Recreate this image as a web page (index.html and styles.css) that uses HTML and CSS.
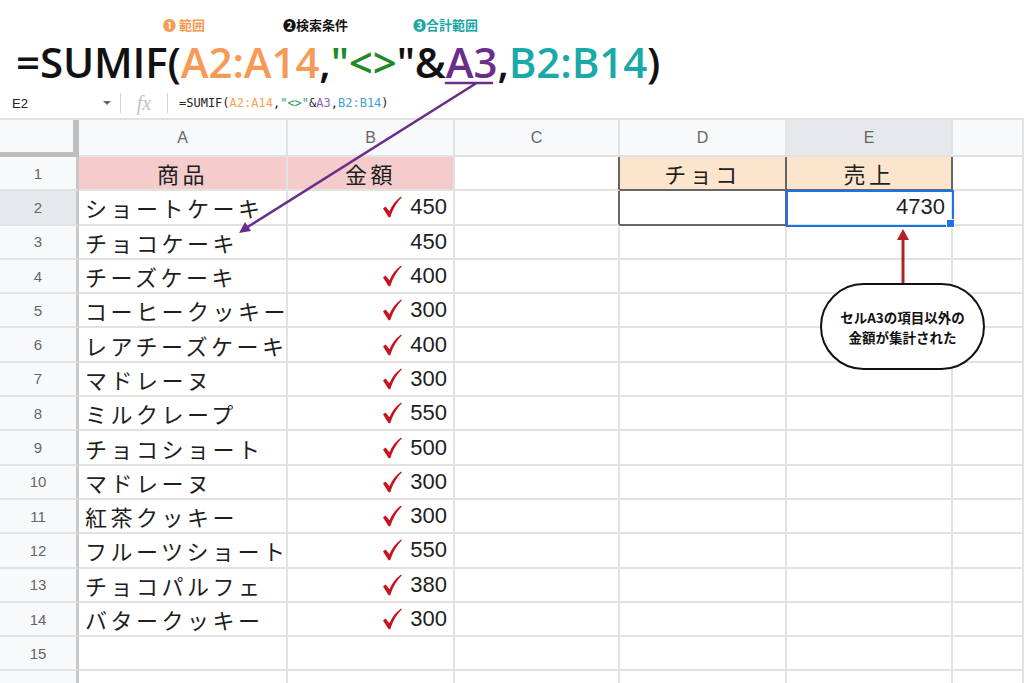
FILE: index.html
```html
<!DOCTYPE html>
<html lang="ja">
<head>
<meta charset="utf-8">
<title>SUMIF</title>
<link rel="stylesheet" href="styles.css">
</head>
<body>
<div class="page">
  <div class="top">
    <div class="labels">
      <span class="lbl lbl1">❶ 範囲</span>
      <span class="lbl lbl2">❷検索条件</span>
      <span class="lbl lbl3">❸合計範囲</span>
    </div>
    <div class="big">=SUMIF(<span class="c-or">A2:A14</span>,<span class="c-gr">"&lt;&gt;</span>"&amp;<span class="c-pu">A3</span>,<span class="c-te">B2:B14</span>)</div>
  </div>
  <div class="fbar">
    <div class="namebox">E2</div>
    <div class="caret"></div>
    <div class="sep"></div>
    <div class="fx">fx</div>
    <div class="sep"></div>
    <div class="ftext">=SUMIF(<span class="f-or">A2:A14</span>,<span class="f-gr">"&lt;&gt;"</span>&amp;<span class="f-pu">A3</span>,<span class="f-bl">B2:B14</span>)</div>
  </div>
  <div class="sheet">
    <div class="corner"></div>
    <div class="ch">A</div><div class="ch">B</div><div class="ch">C</div><div class="ch">D</div><div class="ch sel">E</div><div class="ch"></div>

    <div class="rh">1</div>
    <div class="c jp pink center">商品</div><div class="c jp pink center">金額</div><div class="c dk-r"></div><div class="c jp peach center dk-r dk-b">チョコ</div><div class="c jp peach center dk-r dk-b">売上</div><div class="c"></div>

    <div class="rh sel">2</div>
    <div class="c jp">ショートケーキ</div><div class="c num"><svg class="chk" viewBox="0 0 20 22"><path d="M1 12.6 L3.6 10.6 L7.4 15.2 C10.2 9 14 4.2 19 0.6 L19.8 1.6 C15 6.2 11.2 12.4 8.3 21.2 L6.6 21.2 Z"/></svg>450</div><div class="c dk-r"></div><div class="c dk-r dk-b"></div><div class="c num active">4730</div><div class="c"></div>

    <div class="rh">3</div>
    <div class="c jp">チョコケーキ</div><div class="c num">450</div><div class="c"></div><div class="c"></div><div class="c"></div><div class="c"></div>

    <div class="rh">4</div>
    <div class="c jp">チーズケーキ</div><div class="c num"><svg class="chk" viewBox="0 0 20 22"><path d="M1 12.6 L3.6 10.6 L7.4 15.2 C10.2 9 14 4.2 19 0.6 L19.8 1.6 C15 6.2 11.2 12.4 8.3 21.2 L6.6 21.2 Z"/></svg>400</div><div class="c"></div><div class="c"></div><div class="c"></div><div class="c"></div>

    <div class="rh">5</div>
    <div class="c jp">コーヒークッキー</div><div class="c num"><svg class="chk" viewBox="0 0 20 22"><path d="M1 12.6 L3.6 10.6 L7.4 15.2 C10.2 9 14 4.2 19 0.6 L19.8 1.6 C15 6.2 11.2 12.4 8.3 21.2 L6.6 21.2 Z"/></svg>300</div><div class="c"></div><div class="c"></div><div class="c"></div><div class="c"></div>

    <div class="rh">6</div>
    <div class="c jp">レアチーズケーキ</div><div class="c num"><svg class="chk" viewBox="0 0 20 22"><path d="M1 12.6 L3.6 10.6 L7.4 15.2 C10.2 9 14 4.2 19 0.6 L19.8 1.6 C15 6.2 11.2 12.4 8.3 21.2 L6.6 21.2 Z"/></svg>400</div><div class="c"></div><div class="c"></div><div class="c"></div><div class="c"></div>

    <div class="rh">7</div>
    <div class="c jp">マドレーヌ</div><div class="c num"><svg class="chk" viewBox="0 0 20 22"><path d="M1 12.6 L3.6 10.6 L7.4 15.2 C10.2 9 14 4.2 19 0.6 L19.8 1.6 C15 6.2 11.2 12.4 8.3 21.2 L6.6 21.2 Z"/></svg>300</div><div class="c"></div><div class="c"></div><div class="c"></div><div class="c"></div>

    <div class="rh">8</div>
    <div class="c jp">ミルクレープ</div><div class="c num"><svg class="chk" viewBox="0 0 20 22"><path d="M1 12.6 L3.6 10.6 L7.4 15.2 C10.2 9 14 4.2 19 0.6 L19.8 1.6 C15 6.2 11.2 12.4 8.3 21.2 L6.6 21.2 Z"/></svg>550</div><div class="c"></div><div class="c"></div><div class="c"></div><div class="c"></div>

    <div class="rh">9</div>
    <div class="c jp">チョコショート</div><div class="c num"><svg class="chk" viewBox="0 0 20 22"><path d="M1 12.6 L3.6 10.6 L7.4 15.2 C10.2 9 14 4.2 19 0.6 L19.8 1.6 C15 6.2 11.2 12.4 8.3 21.2 L6.6 21.2 Z"/></svg>500</div><div class="c"></div><div class="c"></div><div class="c"></div><div class="c"></div>

    <div class="rh">10</div>
    <div class="c jp">マドレーヌ</div><div class="c num"><svg class="chk" viewBox="0 0 20 22"><path d="M1 12.6 L3.6 10.6 L7.4 15.2 C10.2 9 14 4.2 19 0.6 L19.8 1.6 C15 6.2 11.2 12.4 8.3 21.2 L6.6 21.2 Z"/></svg>300</div><div class="c"></div><div class="c"></div><div class="c"></div><div class="c"></div>

    <div class="rh">11</div>
    <div class="c jp">紅茶クッキー</div><div class="c num"><svg class="chk" viewBox="0 0 20 22"><path d="M1 12.6 L3.6 10.6 L7.4 15.2 C10.2 9 14 4.2 19 0.6 L19.8 1.6 C15 6.2 11.2 12.4 8.3 21.2 L6.6 21.2 Z"/></svg>300</div><div class="c"></div><div class="c"></div><div class="c"></div><div class="c"></div>

    <div class="rh">12</div>
    <div class="c jp">フルーツショート</div><div class="c num"><svg class="chk" viewBox="0 0 20 22"><path d="M1 12.6 L3.6 10.6 L7.4 15.2 C10.2 9 14 4.2 19 0.6 L19.8 1.6 C15 6.2 11.2 12.4 8.3 21.2 L6.6 21.2 Z"/></svg>550</div><div class="c"></div><div class="c"></div><div class="c"></div><div class="c"></div>

    <div class="rh">13</div>
    <div class="c jp">チョコパルフェ</div><div class="c num"><svg class="chk" viewBox="0 0 20 22"><path d="M1 12.6 L3.6 10.6 L7.4 15.2 C10.2 9 14 4.2 19 0.6 L19.8 1.6 C15 6.2 11.2 12.4 8.3 21.2 L6.6 21.2 Z"/></svg>380</div><div class="c"></div><div class="c"></div><div class="c"></div><div class="c"></div>

    <div class="rh">14</div>
    <div class="c jp">バタークッキー</div><div class="c num"><svg class="chk" viewBox="0 0 20 22"><path d="M1 12.6 L3.6 10.6 L7.4 15.2 C10.2 9 14 4.2 19 0.6 L19.8 1.6 C15 6.2 11.2 12.4 8.3 21.2 L6.6 21.2 Z"/></svg>300</div><div class="c"></div><div class="c"></div><div class="c"></div><div class="c"></div>

    <div class="rh">15</div>
    <div class="c"></div><div class="c"></div><div class="c"></div><div class="c"></div><div class="c"></div><div class="c"></div>

    <div class="rh"></div>
    <div class="c"></div><div class="c"></div><div class="c"></div><div class="c"></div><div class="c"></div><div class="c"></div>
  </div>

  <svg class="overlay" viewBox="0 0 1024 683" width="1024" height="683">
    <g stroke="#6b2d8c" stroke-width="2.6" fill="none" stroke-linecap="round">
      <line x1="446" y1="83" x2="492" y2="83"/>
      <line x1="475" y1="84" x2="246" y2="228"/>
    </g>
    <path d="M239 233 L245 222 L251 231 Z" fill="#6b2d8c"/>
    <line x1="903" y1="290" x2="903" y2="238" stroke="#b3202a" stroke-width="3"/>
    <path d="M903 229 L897 240 L909 240 Z" fill="#b3202a"/>
  </svg>

  <div class="callout">セルA3の項目以外の<br>金額が集計された</div>
</div>
</body>
</html>
```

FILE: styles.css
```css
* { box-sizing: border-box; }
html, body { margin: 0; padding: 0; background: #fff; }
body { width: 1024px; height: 683px; overflow: hidden; font-family: "Liberation Sans", "Noto Sans CJK JP", sans-serif; color: #222; }
.page { position: relative; width: 1024px; height: 683px; overflow: hidden; }

.top { height: 88px; padding-top: 16px; }
.labels { display: flex; height: 18px; font-family: "Noto Sans CJK JP", sans-serif; font-weight: 700; font-size: 13px; line-height: 18px; }
.lbl { display: block; }
.lbl1 { margin-left: 163px; width: 120px; color: #f79a55; }
.lbl2 { width: 130px; color: #111; }
.lbl3 { color: #1aa7a7; }
.big { margin-top: 6px; padding-left: 16px; font-family: "Open Sans", sans-serif; font-weight: 600; font-size: 42px; line-height: 44px; color: #111; white-space: nowrap; letter-spacing: -0.1px; }
.c-or { color: #f79a55; }
.c-gr { color: #1f8a2a; }
.c-pu { color: #6b2d8c; }
.c-te { color: #19a9a9; }

.fbar { height: 30px; display: flex; align-items: center; }
.namebox { width: 100px; padding-left: 12px; font-size: 13px; color: #222; }
.caret { width: 0; height: 0; border-left: 4px solid transparent; border-right: 4px solid transparent; border-top: 4px solid #666; margin-left: 3px; margin-right: 9px; }
.sep { width: 1px; height: 20px; background: #d4d4d4; }
.fx { width: 46px; text-align: center; font-family: "Liberation Serif", serif; font-style: italic; font-size: 20px; color: #c2c2c2; line-height: 20px; }
.ftext { padding-left: 11px; font-family: "DejaVu Sans Mono", monospace; font-size: 12px; color: #222; white-space: nowrap; }
.f-or { color: #f3a350; }
.f-gr { color: #2e9a5e; }
.f-pu { color: #8e63b8; }
.f-bl { color: #42a0dc; }

.sheet { display: grid; grid-template-columns: 79px 209px 167px 165px 167px 166px 71px; grid-template-rows: 37px repeat(16, 34.3px); border-top: 2px solid #e2e2e2; }
.corner { background: #f8f9fa; border-right: 6px solid #bebebe; border-bottom: 5px solid #bebebe; }
.ch { background: #f8f9fa; border-right: 2px solid #e2e2e2; border-bottom: 2px solid #e2e2e2; display: flex; align-items: center; justify-content: center; font-size: 16px; color: #666; }
.ch.sel { background: #e6e8eb; }
.rh { background: #f8f9fa; border-right: 3px solid #c8c8c8; border-bottom: 2px solid #e2e2e2; display: flex; align-items: center; justify-content: center; font-size: 15px; color: #666; }
.rh.sel { background: #e6e8eb; }
.c { border-right: 2px solid #e2e2e2; border-bottom: 2px solid #e2e2e2; display: flex; align-items: center; padding: 0 6px; font-size: 22px; color: #1e1e1e; white-space: nowrap; }
.jp { font-family: "Liberation Sans", "Noto Sans CJK JP", sans-serif; letter-spacing: 3.5px; font-weight: 400; }
.center { justify-content: center; }
.num { justify-content: flex-end; gap: 8px; }
.pink { background: #f4cccc; }
.peach { background: #fce5cd; }
.dk-r { border-right-color: #666; }
.dk-b { border-bottom-color: #666; }
.chk { width: 20px; height: 22px; fill: #c8121e; }
.active { position: relative; outline: 2px solid #1a73e8; outline-offset: -1px; }
.active::after { content: ""; position: absolute; right: -4px; bottom: -4px; width: 7px; height: 7px; background: #1a73e8; border: 1px solid #fff; }

.overlay { position: absolute; left: 0; top: 0; pointer-events: none; }
.callout { position: absolute; left: 820px; top: 283px; width: 165px; height: 87px; border: 2px solid #111; border-radius: 44px; background: #fff; display: flex; align-items: center; justify-content: center; text-align: center; font-family: "Noto Sans CJK JP", sans-serif; font-weight: 700; font-size: 13.5px; line-height: 20px; color: #111; }
```
